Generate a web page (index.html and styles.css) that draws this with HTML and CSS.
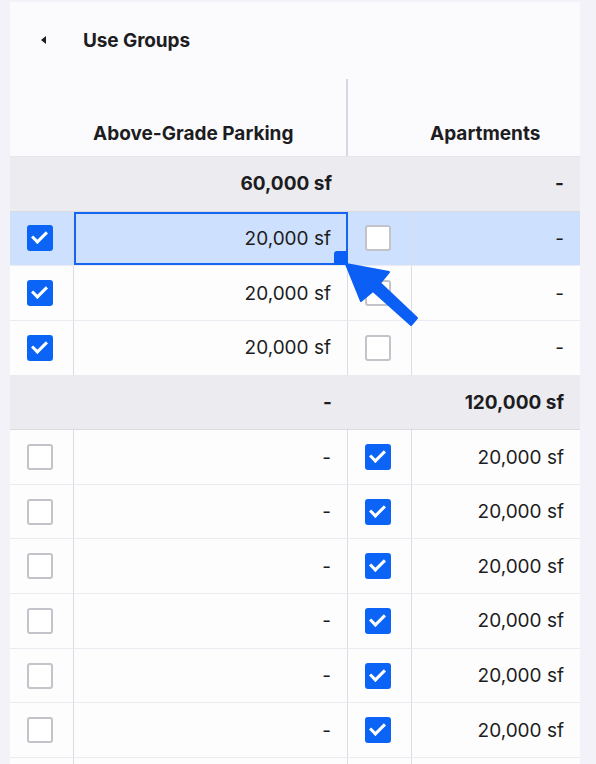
FILE: index.html
```html
<!DOCTYPE html>
<html>
<head>
<meta charset="utf-8">
<link rel="stylesheet" href="styles.css">
</head>
<body>
<div class="panel">
  <div class="title">
    <span class="caret"></span>
    <span class="title-text">Use Groups</span>
  </div>
  <div class="row head">
    <div class="cell"></div>
    <div class="cell htext sep">Above-Grade Parking</div>
    <div class="cell"></div>
    <div class="cell htext">Apartments</div>
  </div>

  <div class="row group">
    <div class="cell"></div>
    <div class="cell val">60,000 sf</div>
    <div class="cell"></div>
    <div class="cell val">-</div>
  </div>
  <div class="row selected">
    <div class="cell box"><span class="cb on"></span></div>
    <div class="cell val active">20,000 sf<span class="sel"></span><span class="handle"></span></div>
    <div class="cell box"><span class="cb"></span></div>
    <div class="cell val">-</div>
  </div>
  <div class="row">
    <div class="cell box"><span class="cb on"></span></div>
    <div class="cell val">20,000 sf</div>
    <div class="cell box"><span class="cb"></span></div>
    <div class="cell val">-</div>
  </div>
  <div class="row">
    <div class="cell box"><span class="cb on"></span></div>
    <div class="cell val">20,000 sf</div>
    <div class="cell box"><span class="cb"></span></div>
    <div class="cell val">-</div>
  </div>

  <div class="row group">
    <div class="cell"></div>
    <div class="cell val">-</div>
    <div class="cell"></div>
    <div class="cell val">120,000 sf</div>
  </div>
  <div class="row">
    <div class="cell box"><span class="cb"></span></div>
    <div class="cell val">-</div>
    <div class="cell box"><span class="cb on"></span></div>
    <div class="cell val">20,000 sf</div>
  </div>
  <div class="row">
    <div class="cell box"><span class="cb"></span></div>
    <div class="cell val">-</div>
    <div class="cell box"><span class="cb on"></span></div>
    <div class="cell val">20,000 sf</div>
  </div>
  <div class="row">
    <div class="cell box"><span class="cb"></span></div>
    <div class="cell val">-</div>
    <div class="cell box"><span class="cb on"></span></div>
    <div class="cell val">20,000 sf</div>
  </div>
  <div class="row">
    <div class="cell box"><span class="cb"></span></div>
    <div class="cell val">-</div>
    <div class="cell box"><span class="cb on"></span></div>
    <div class="cell val">20,000 sf</div>
  </div>
  <div class="row">
    <div class="cell box"><span class="cb"></span></div>
    <div class="cell val">-</div>
    <div class="cell box"><span class="cb on"></span></div>
    <div class="cell val">20,000 sf</div>
  </div>
  <div class="row">
    <div class="cell box"><span class="cb"></span></div>
    <div class="cell val">-</div>
    <div class="cell box"><span class="cb on"></span></div>
    <div class="cell val">20,000 sf</div>
  </div>
  <div class="row">
    <div class="cell box"></div>
    <div class="cell val"></div>
    <div class="cell box"></div>
    <div class="cell val"></div>
  </div>

  <svg class="cursor" width="85" height="80" viewBox="0 0 85 80">
    <polygon points="6,12 49,20 40,31 77,66 71,73 33,39 21,49" fill="#0b5ff4" stroke="#0b5ff4" stroke-width="2" stroke-linejoin="round"/>
  </svg>
</div>
</body>
</html>
```

FILE: styles.css
```css
html, body {
  margin: 0;
  padding: 0;
}
body {
  background: #f2f2f8;
  font-family: Inter, "Noto Sans", sans-serif;
  color: #1c1c21;
  height: 764px;
  overflow: hidden;
}
.panel {
  position: relative;
  margin: 2px 0 0 10px;
  width: 570px;
  background: #fbfbfe;
}
.title {
  height: 76px;
  display: flex;
  align-items: center;
  box-sizing: border-box;
  padding-left: 31px;
}
.caret {
  width: 0;
  height: 0;
  border-top: 4px solid transparent;
  border-bottom: 4px solid transparent;
  border-right: 5px solid #1c1c21;
  margin-right: 37px;
}
.title-text {
  font-weight: 700;
  font-size: 19px;
  letter-spacing: -0.1px;
}
.row {
  display: grid;
  grid-template-columns: 64px 274px 64px 168px;
  height: 54.65px;
  box-sizing: border-box;
  border-bottom: 1px solid #ebebf1;
  background: #fdfdfe;
}
.row.head {
  height: 79px;
  background: #fbfbfe;
  border-bottom: 1px solid #e6e6ec;
}
.cell {
  box-sizing: border-box;
  display: flex;
  align-items: center;
}
.row .cell:nth-child(1),
.row .cell:nth-child(2),
.row .cell:nth-child(3) {
  border-right: 1px solid #dcdce5;
}
.row.group .cell,
.row.head .cell {
  border-right: none;
}
.row.head .cell.sep {
  border-right: 2px solid #d6d6e4;
  margin-top: 1px;
}
.htext {
  font-weight: 700;
  font-size: 19px;
  padding-left: 19px;
  align-items: flex-end;
  padding-bottom: 11px;
}
.row.head .cell:nth-child(4) {
  padding-left: 18px;
}
.row.group {
  background: #ebebf0;
  border-bottom: 1px solid #dadae0;
}
.row.group .val {
  font-weight: 700;
}
.val {
  justify-content: flex-end;
  padding-right: 16px;
  font-size: 19px;
}
.box {
  justify-content: center;
  padding-right: 3px;
}
.row.selected {
  background: #cde0fd;
}
.active {
  position: relative;
}
.sel {
  position: absolute;
  left: 0;
  top: 0;
  right: -1px;
  bottom: 0;
  border: 2px solid #1565f0;
}
.handle {
  position: absolute;
  right: -1px;
  bottom: 0;
  width: 14px;
  height: 14px;
  background: #0b5ff4;
  border-radius: 3px 0 0 0;
}
.cb {
  width: 26px;
  height: 26px;
  box-sizing: border-box;
  border: 2.5px solid #c3c3c9;
  border-radius: 3px;
  background: #ffffff;
  position: relative;
}
.cb.on {
  background: #0b64f6;
  border-color: #0b64f6;
}
.cb.on::after {
  content: "";
  position: absolute;
  left: 6px;
  top: 1px;
  width: 6px;
  height: 12px;
  border-right: 3px solid #ffffff;
  border-bottom: 3px solid #ffffff;
  transform: rotate(45deg);
}
.cursor {
  position: absolute;
  left: 330px;
  top: 250px;
}
```
